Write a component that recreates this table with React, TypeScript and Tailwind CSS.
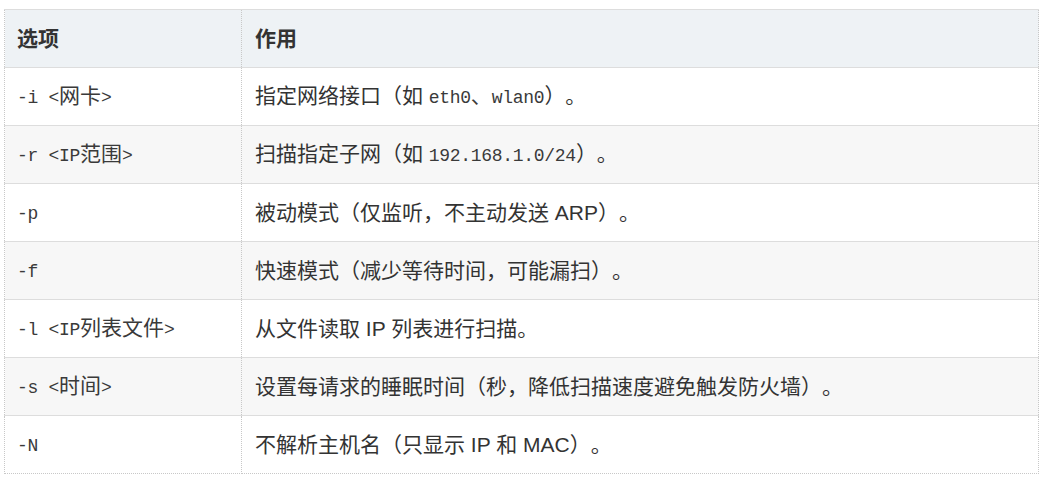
const rows = [
  { opt: "-i <网卡>", desc: ["指定网络接口（如 ", { code: "eth0、wlan0" }, "）。"] },
  { opt: "-r <IP范围>", desc: ["扫描指定子网（如 ", { code: "192.168.1.0/24" }, "）。"] },
  { opt: "-p", desc: ["被动模式（仅监听，不主动发送 ARP）。"] },
  { opt: "-f", desc: ["快速模式（减少等待时间，可能漏扫）。"] },
  { opt: "-l <IP列表文件>", desc: ["从文件读取 IP 列表进行扫描。"] },
  { opt: "-s <时间>", desc: ["设置每请求的睡眠时间（秒，降低扫描速度避免触发防火墙）。"] },
  { opt: "-N", desc: ["不解析主机名（只显示 IP 和 MAC）。"] },
]

type Piece = string | { code: string }

const CJK = /([\u3000-\u303f\u4e00-\u9fff\uff00-\uffef]+)/

// mono runs are narrower than the CJK ones, so split them
const Mono = ({ text }: { text: string }) => {
  const parts = text.split(CJK).filter(Boolean)
  return (
    <span className="font-['Liberation_Mono','Noto_Sans_CJK_SC',monospace] text-[#3a3a3a]">
      {parts.map((p, i) =>
        CJK.test(p) ? (
          <span key={i} className="text-[21px] font-['Noto_Sans_CJK_SC',sans-serif]">
            {p}
          </span>
        ) : (
          <span key={i} className="text-[18px] tracking-[-0.3px]">
            {p}
          </span>
        )
      )}
    </span>
  )
}

const Desc = ({ pieces }: { pieces: Piece[] }) => (
  <>
    {pieces.map((p, i) =>
      typeof p === "string" ? <span key={i}>{p}</span> : <Mono key={i} text={p.code} />
    )}
  </>
)

const side = "[border-left-style:dotted] [border-right-style:dotted] border-l-[#c8c8c8] border-r-[#c8c8c8]"

export default function App() {
  return (
    <div className="bg-white w-[1052px] h-[480px] pt-[9px] pl-[4px] font-['Liberation_Sans','Noto_Sans_CJK_SC',sans-serif] text-[21px] text-[#333] [text-spacing-trim:space-all]">
      <table className="border-collapse w-[1035px] table-fixed">
        <colgroup>
          <col className="w-[237px]" />
          <col />
        </colgroup>
        <thead>
          <tr className="bg-[#eef2f5]">
            <th className={`h-[58px] px-[12px] text-left font-bold border [border-top-style:solid] [border-bottom-style:solid] border-t-[#ddd] border-b-[#ddd] ${side}`}>
              选项
            </th>
            <th className={`h-[58px] px-[13px] text-left font-bold border [border-top-style:solid] [border-bottom-style:solid] border-t-[#ddd] border-b-[#ddd] ${side}`}>
              作用
            </th>
          </tr>
        </thead>
        <tbody>
          {rows.map((r, i) => {
            const last = i === rows.length - 1
            const bottom = last
              ? "[border-bottom-style:dotted] border-b-[#c8c8c8]"
              : "[border-bottom-style:solid] border-b-[#ddd]"
            return (
              <tr key={r.opt} className={i % 2 === 1 ? "bg-[#f7f7f7]" : "bg-white"}>
                <td className={`h-[58px] px-[12px] align-middle border-0 border-l border-r border-b ${side} ${bottom}`}>
                  <Mono text={r.opt} />
                </td>
                <td className={`h-[58px] px-[13px] align-middle border-0 border-l border-r border-b ${side} ${bottom}`}>
                  <Desc pieces={r.desc as Piece[]} />
                </td>
              </tr>
            )
          })}
        </tbody>
      </table>
    </div>
  )
}
